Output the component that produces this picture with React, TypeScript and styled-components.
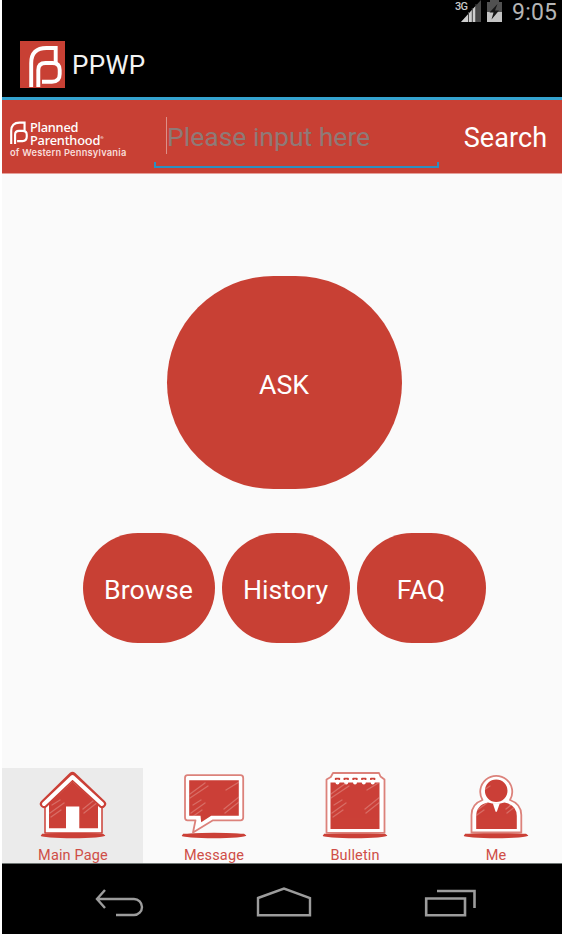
import React from "react";
import styled, { createGlobalStyle } from "styled-components";

const RED = "#c84034";
const SKETCH = "#cb4037";

const GlobalStyle = createGlobalStyle`
  * { box-sizing: border-box; }
  body { margin: 0; background: #fff; overflow: hidden; }
  button { border: 0; padding: 0; background: none; font: inherit; color: inherit; }
`;

const Screen = styled.div`
  width: 560px;
  height: 934px;
  margin-left: 2px;
  display: flex;
  flex-direction: column;
  overflow: hidden;
  background: #fafafa;
  font-family: Roboto, "Noto Sans", sans-serif;
`;

const StatusBar = styled.div`
  height: 26px;
  flex: none;
  display: flex;
  justify-content: flex-end;
  background: #000;
  color: #b5b5b5;
`;

const Clock = styled.span`
  width: 50px;
  font-size: 23px;
  line-height: 26px;
  letter-spacing: 0.2px;
  white-space: nowrap;
`;

const ActionBar = styled.header`
  height: 71px;
  flex: none;
  display: flex;
  align-items: center;
  padding: 6px 0 0 18px;
  background: #000;
  color: #f3f3f3;
`;

const AppName = styled.h1`
  margin: 1px 0 0 7px;
  font-size: 26px;
  font-weight: 400;
  line-height: 32px;
  letter-spacing: 0.3px;
`;

const SearchBar = styled.div`
  height: 77px;
  flex: none;
  display: flex;
  border-top: 3px solid #35a3cf;
  border-bottom: 1px solid #e4a09a;
  background: ${RED};
  color: #fff;
`;

const Brand = styled.div`
  width: 152px;
  padding: 21px 0 0 8px;
`;

const BrandTop = styled.div`
  display: flex;
  gap: 2px;
`;

const BrandName = styled.div`
  display: grid;
  grid-template-rows: 12.5px 12.5px;
  font: 500 12.8px/12px "Noto Sans", sans-serif;
  white-space: nowrap;
`;

const BrandLine = styled.div<{ $spacing: string }>`
  height: 12px;
  display: flex;
  letter-spacing: ${(p) => p.$spacing};
`;

const Trademark = styled.span`
  font-size: 4px;
  line-height: 8px;
`;

const BrandRegion = styled.div`
  margin-top: 1px;
  font: 600 9.3px/12px "Inter", sans-serif;
  letter-spacing: 0.2px;
  color: #f8dcd9;
  white-space: nowrap;
`;

const Field = styled.div`
  width: 285px;
  height: 68px;
  display: flex;
  flex-direction: column;
  justify-content: space-between;
`;

const Placeholder = styled.div`
  height: 37px;
  margin: 17px 0 0 12px;
  border-left: 1.5px solid #dd8f88;
  color: #8f7a77;
  font-size: 26.5px;
  line-height: 40px;
  white-space: nowrap;
`;

const Underline = styled.div`
  height: 6px;
  border: solid #2c8fc0;
  border-width: 0 2px 2px;
`;

const SearchButton = styled.button`
  flex: 1;
  padding-left: 10px;
  margin-top: 3px;
  font-size: 27px;
  letter-spacing: 0.1px;
  text-align: center;
`;

const Main = styled.main`
  flex: 1;
  display: flex;
  flex-direction: column;
  align-items: center;
  padding: 102px 0 0 4px;
`;

const Bubble = styled.button<{ $w: number; $h: number }>`
  width: ${(p) => p.$w}px;
  height: ${(p) => p.$h}px;
  border-radius: ${(p) => p.$h / 2}px;
  background: ${RED};
  color: #fff;
  font-size: 26.7px;
  letter-spacing: 0.05px;
  padding-top: 4px;
`;

const BubbleRow = styled.div`
  display: flex;
  gap: 7px;
  margin-top: 44px;
`;

const Tabs = styled.nav`
  height: 95px;
  flex: none;
  display: flex;
`;

const Tab = styled.button<{ $active?: boolean }>`
  width: 141px;
  flex: none;
  display: flex;
  flex-direction: column;
  align-items: center;
  padding-left: 1px;
  background: ${(p) => (p.$active ? "#ebebeb" : "transparent")};
  color: #cf4e47;
  font-size: 14.5px;
  line-height: 17px;
  letter-spacing: 0.15px;
  svg { flex: none; margin-bottom: 5px; }
`;

const NavBar = styled.div`
  height: 71px;
  flex: none;
  display: flex;
  align-items: center;
  justify-content: space-between;
  padding: 7px 85px 0 92px;
  border-top: 1px solid #6f7573;
  background: #000;
`;

function PMark({ w, h }: { w: number; h: number }) {
  return (
    <svg width={w} height={h} viewBox="9 4 33 42" fill="none" stroke="#fff" strokeWidth="3.9">
      <path d="M11.2 46V22Q11.2 7 26.5 7H35.7V22" />
      <path d="M18.3 46V29Q18.3 22 25.5 22H32.5Q39.7 22 39.7 29V33Q39.7 40.7 32 40.7H22" />
    </svg>
  );
}

const AppIcon = styled.div`
  width: 45px;
  height: 47px;
  display: flex;
  align-items: flex-start;
  justify-content: flex-start;
  padding: 4px 0 0 9px;
  background: ${RED};
`;

function Signal() {
  return (
    <svg width="31" height="26" viewBox="0 0 31 26">
      <path d="M7 22L27 0V22Z" fill="#484848" />
      <path d="M7 22L21.5 6V22Z" fill="#cfcfcf" />
      <path d="M14.5 12V22M18.3 8V22M22 4V22" stroke="#444" strokeWidth="1" />
      <rect x="1" y="0" width="14.5" height="11" fill="#000" />
      <text x="1" y="9.5" fontSize="11" fontWeight="500" fontFamily="Roboto" fill="#c8c8c8" textLength="13">3G</text>
    </svg>
  );
}

function Battery() {
  return (
    <svg width="27" height="26" viewBox="0 0 27 26">
      <path d="M5 0H14V2H17V12H2V2H5Z" fill="#515151" />
      <path d="M2 12H17V22H2Z" fill="#c4c4c4" />
      <path d="M12.5 4L4.5 12.5H8.5L6.5 19.5L14 10.5H10Z" fill="#161616" />
    </svg>
  );
}

/* Pale scratches that give each filled shape its hand-drawn look. */
function Scratches() {
  return (
    <g stroke="#eab0aa" strokeWidth="1.3" opacity="0.4" fill="none">
      <path d="M16 26L31 15M16 30L34 18M17 45L31 35M18 49L28 42" />
      <path d="M50 41L65 29M51 45L65 34M52 22L65 14M19 37L27 32" />
    </g>
  );
}

function Ground({ y = 67.5 }: { y?: number }) {
  return (
    <g fill={SKETCH}>
      <ellipse cx="40" cy={y} rx="32.3" ry="2.7" />
      <path d={`M9 ${y - 1.8}H70L72 ${y}L55 ${y + 1.5}L8 ${y + 0.8}Z`} />
    </g>
  );
}

function IconFrame({ children, clip, id }: { children: React.ReactNode; clip: React.ReactNode; id: string }) {
  return (
    <svg width="80" height="74" viewBox="0 0 80 74" strokeLinejoin="round" strokeLinecap="round">
      <defs>
        <clipPath id={id}>{clip}</clipPath>
      </defs>
      {children}
      <g clipPath={`url(#${id})`}>
        <Scratches />
      </g>
    </svg>
  );
}

function HouseIcon() {
  const body = <path d="M39.5 13.5L65 37V60.3H46.3V38.5H33V60.3H16V36Z" />;
  return (
    <IconFrame id="house" clip={body}>
      <Ground />
      <path d="M12 39V65H69V39L39.5 11Z" fill="#fff" stroke={SKETCH} strokeWidth="1.5" />
      <g fill={SKETCH}>{body}</g>
      <path d="M11 36L39.5 8L69 36" fill="none" stroke={SKETCH} strokeWidth="8.2" />
      <path d="M11 36L39.5 9L69 36" fill="none" stroke="#fff" strokeWidth="4" />
    </IconFrame>
  );
}

function MessageIcon() {
  const body = <path d="M15.2 12.3H64.8V47.7H37.2L27.2 54.3L26.5 47.7H15.2Z" />;
  return (
    <IconFrame id="message" clip={body}>
      <Ground />
      <path
        d="M13.5 7.2H66.5Q69.2 7.2 69.2 10V49.5Q69.2 52.3 66.5 52.3H39L19 64.5L21.5 52.3H13.5Q11 52.3 11 49.5V10Q11 7.2 13.5 7.2Z"
        fill="#fff" stroke="#dc827b" strokeWidth="1.8"
      />
      <g fill={SKETCH}>{body}</g>
    </IconFrame>
  );
}

function NotepadIcon() {
  const body = <path d="M15.5 14.5H64.5V61H15.5Z" />;
  return (
    <IconFrame id="notepad" clip={body}>
      <Ground />
      <path
        d="M18 5H64L65.5 8.5L69.5 11.5V64.8H11.5V11.5L15.8 9Z"
        fill="#fff" stroke="#dc827b" strokeWidth="1.8"
      />
      <g fill={SKETCH}>{body}</g>
      {[22.5, 31.2, 40, 48.8, 57.7].map((x) => (
        <g key={x}>
          <circle cx={x} cy="14.6" r="2" fill="#fff" />
          <path d={`M${x - 1.8} 11.2V10.6H${x + 1.8}V11.2`} fill="none" stroke={SKETCH} strokeWidth="1.8" />
        </g>
      ))}
    </IconFrame>
  );
}

function PersonIcon() {
  const body = (
    <path d="M40.2 11.4a11.3 11.3 0 1 1 0 22.6a11.3 11.3 0 1 1 0-22.6ZM20.2 61V48Q20.2 37 32 34.5Q40 37 48.5 34.5Q60.8 37 60.8 48V61Z" />
  );
  return (
    <IconFrame id="person" clip={body}>
      <Ground />
      <path
        d="M15.5 64.5V47Q15.5 36 26.5 32A16 16 0 1 1 54 32Q65.3 36 65.3 47V64.5Z"
        fill="#fff" stroke="#dc827b" strokeWidth="1.8"
      />
      <g fill={SKETCH}>{body}</g>
      <path d="M36.8 35.2H43.8L40.8 43.7H39.6Z" fill="#fff" />
    </IconFrame>
  );
}

const tabs = [
  { label: "Main Page", icon: <HouseIcon />, active: true },
  { label: "Message", icon: <MessageIcon /> },
  { label: "Bulletin", icon: <NotepadIcon /> },
  { label: "Me", icon: <PersonIcon /> },
];

export default function App() {
  return (
    <Screen>
      <GlobalStyle />
      <StatusBar>
        <Signal />
        <Battery />
        <Clock>9:05</Clock>
      </StatusBar>
      <ActionBar>
        <AppIcon>
          <PMark w={33} h={42} />
        </AppIcon>
        <AppName>PPWP</AppName>
      </ActionBar>
      <SearchBar>
        <Brand>
          <BrandTop>
            <PMark w={18} h={23} />
            <BrandName>
              <BrandLine $spacing="-0.25px">Planned</BrandLine>
              <BrandLine $spacing="-0.2px">
                Parenthood<Trademark>®</Trademark>
              </BrandLine>
            </BrandName>
          </BrandTop>
          <BrandRegion>of Western Pennsylvania</BrandRegion>
        </Brand>
        <Field>
          <Placeholder>Please input here</Placeholder>
          <Underline />
        </Field>
        <SearchButton>Search</SearchButton>
      </SearchBar>
      <Main>
        <Bubble $w={235} $h={213}>ASK</Bubble>
        <BubbleRow>
          <Bubble $w={132} $h={110}>Browse</Bubble>
          <Bubble $w={128} $h={110}>History</Bubble>
          <Bubble $w={129} $h={110}>FAQ</Bubble>
        </BubbleRow>
      </Main>
      <Tabs>
        {tabs.map((t) => (
          <Tab key={t.label} $active={t.active}>
            {t.icon}
            {t.label}
          </Tab>
        ))}
      </Tabs>
      <NavBar>
        <svg width="50" height="32" viewBox="0 0 50 32" fill="none" stroke="#9c9c9c" strokeWidth="2.4">
          <path d="M11 3L3 12L11 21M3 12H40A7.8 7.8 0 0 1 40 28H22" />
        </svg>
        <svg width="56" height="32" viewBox="0 0 56 32" fill="none" stroke="#9c9c9c" strokeWidth="2.4">
          <path d="M2 11L28 1.6L54 11V28.2H2Z" />
        </svg>
        <svg width="54" height="32" viewBox="0 0 54 32" fill="none" stroke="#9c9c9c" strokeWidth="2.6">
          <path d="M3.2 11.5H42V28.2H3.2ZM14 4H51.5V21" />
        </svg>
      </NavBar>
    </Screen>
  );
}
